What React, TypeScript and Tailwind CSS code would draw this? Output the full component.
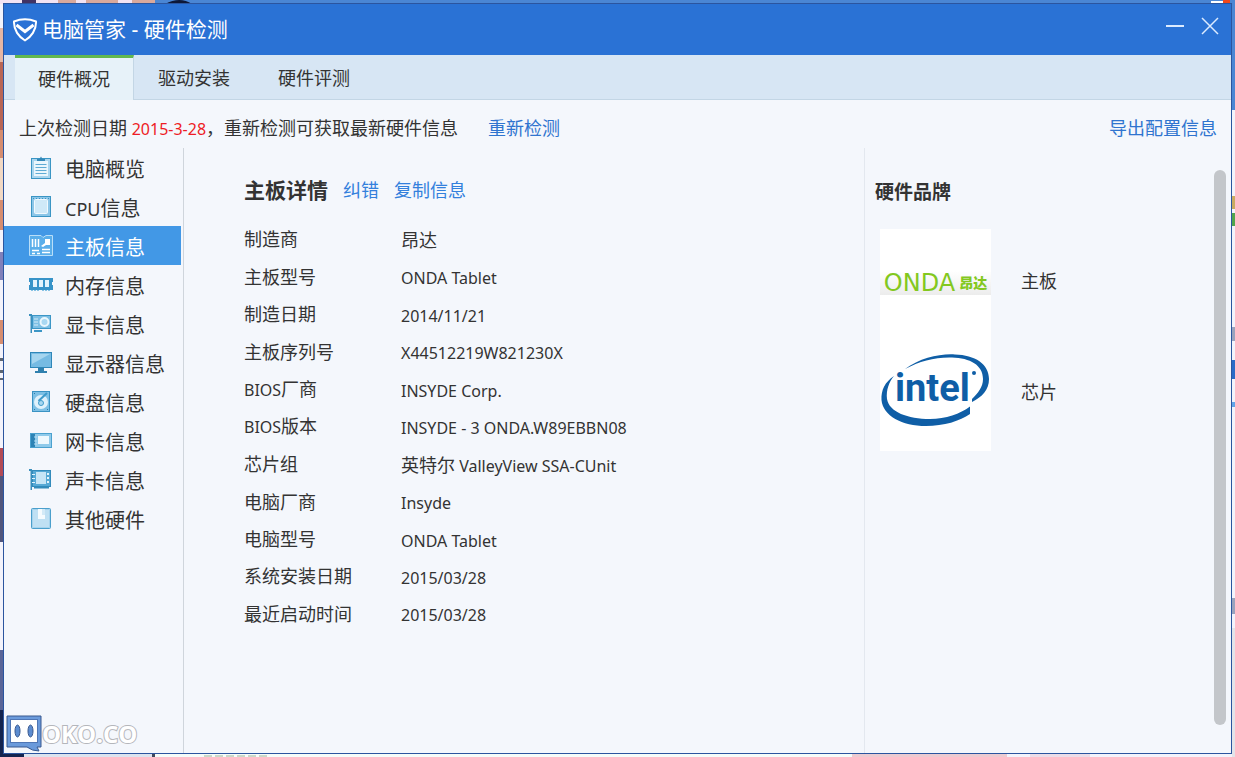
import type { ReactNode } from "react"
import { useState } from "react"

const NAV_ITEMS: { id: string; label: ReactNode; icon: ReactNode }[] = [
  {
    id: "overview",
    label: "电脑概览",
    icon: (
      <>
        <rect x="2.5" y="2.5" width="19" height="20" fill="#a9d5ee" stroke="#3a95c4" />
        <rect x="5" y="5" width="14" height="15" fill="#eaf6fc" />
        <path d="M8 5h8V3h-2.5L12 0.5 10.500 3H8z" fill="#3388b8" />
        <path d="M6.500 8.500h11M6.500 11.500h11M6.500 14.500h11M6.500 17.500h11" stroke="#5fabd4" />
      </>
    ),
  },
  {
    id: "cpu",
    label: (
      <>
        <span className="text-lg">CPU</span>信息
      </>
    ),
    icon: (
      <>
        <rect x="2.5" y="1.500" width="19" height="20" fill="#8cc6e8" stroke="#3a95c4" />
        <rect x="5.500" y="4.500" width="13" height="14" rx="1" fill="#cfe9f8" stroke="#f0f9fe" />
        <path d="M4 3.500h1M7 3.500h1M10 3.500h1M13 3.500h1M16 3.500h1M19 3.500h1" stroke="#3a95c4" />
      </>
    ),
  },
  {
    id: "board",
    label: "主板信息",
    icon: (
      <>
        <path d="M.5 1.500h11.500l2 2 3-2h6.500v20h-23z" fill="#5aaeea" stroke="#b9def8" />
        <path d="M3.500 5v8M6.500 5v8M9.500 5v8" stroke="#fff" strokeWidth="1.500" />
        <path d="M16 5h5v6h-4l-3 2-2-1 4-3z" fill="#fff" />
        <path d="M3 16.500h7M3 19.500h3M8 19.500h3M13 15.500h8M13 18.500h8" stroke="#fff" strokeWidth="1.500" />
      </>
    ),
  },
  {
    id: "memory",
    label: "内存信息",
    icon: (
      <>
        <path d="M0 5h24v4h-1v3h1v5H0v-5h1V9H0z" fill="#3793c8" />
        <path d="M4 7h4v7H4zM10 7h4v7h-4zM16 7h4v7h-4z" fill="#e3f3fc" />
        <path d="M2 17.500h9M13 17.500h9" stroke="#85c2e4" strokeDasharray="2 1" />
      </>
    ),
  },
  {
    id: "gpu",
    label: "显卡信息",
    icon: (
      <>
        <path d="M0 2h3v19H1.500V4H0z" fill="#3a8fbd" />
        <rect x="3.500" y="3.500" width="18" height="13" fill="#7dbfe4" stroke="#3c96c6" />
        <circle cx="15.500" cy="10" r="4" fill="#a9d8f2" stroke="#eaf7fd" strokeWidth="2" />
        <path d="M5 7h4M5 10h4M5 13h4" stroke="#d4ecf9" />
        <path d="M5 18h8v2H5z" fill="#3c96c6" />
      </>
    ),
  },
  {
    id: "display",
    label: "显示器信息",
    icon: (
      <>
        <rect x="1.500" y="1.500" width="21" height="15" fill="#76bbe3" stroke="#2f87b9" />
        <path d="M3 3h18L3 13z" fill="#a5d5ef" />
        <path d="M9 17h6v3h3v2H6v-2h3z" fill="#2f80ae" />
      </>
    ),
  },
  {
    id: "disk",
    label: "硬盘信息",
    icon: (
      <>
        <rect x="3.500" y="1.500" width="17" height="20" fill="#7ec0e5" stroke="#3a93c3" />
        <circle cx="12" cy="12" r="7" fill="#dff1fb" />
        <path d="M18 3 9.500 11" stroke="#3f9bcb" strokeWidth="2" />
        <circle cx="12" cy="13" r="2.500" fill="#a9d7f0" stroke="#3f9bcb" />
        <path d="M5 3.500h1M5 19.500h1M18 19.500h1" stroke="#2b7cab" />
      </>
    ),
  },
  {
    id: "network",
    label: "网卡信息",
    icon: (
      <>
        <rect x="1.500" y="4.500" width="21" height="14" fill="#8fcaea" stroke="#4aa1cf" />
        <path d="M2 5h4v13H2z" fill="#2d83b5" />
        <path d="M5 8h3M5 12h3M5 15h3" stroke="#b8def3" />
        <rect x="9" y="7" width="11" height="8" fill="#eef8fd" />
      </>
    ),
  },
  {
    id: "sound",
    label: "声卡信息",
    icon: (
      <>
        <path d="M0 1h3v21H1.500V3H0z" fill="#3a8fbd" />
        <rect x="3.500" y="2.500" width="18" height="16" fill="#57a9d5" stroke="#338bbb" />
        <rect x="7" y="4" width="10" height="12" fill="#c6e5f6" />
        <path d="M18 5h2v2h-2zM18 9h2v2h-2zM18 13h2v2h-2z" fill="#e4f4fc" />
        <path d="M3 6.500h3M3 10.500h3M3 14.500h3" stroke="#e4f4fc" />
        <path d="M5 19.500h15" stroke="#338bbb" strokeWidth="2" />
      </>
    ),
  },
  {
    id: "other",
    label: "其他硬件",
    icon: (
      <>
        <rect x="2.500" y="1.500" width="19" height="20" rx="1" fill="#a5d3ed" stroke="#4a9fcc" />
        <path d="M4 3h16v17H4z" fill="#bfe0f3" />
        <path d="M9 2h7v10H9z" fill="#f5fbfe" />
        <path d="M13 2h3v6h-3z" fill="#d3eaf7" />
      </>
    ),
  },
]

const DETAILS: { label: ReactNode; value: ReactNode }[] = [
  { label: "制造商", value: <span className="text-lg/6">昂达</span> },
  { label: "主板型号", value: "ONDA Tablet" },
  { label: "制造日期", value: "2014/11/21" },
  { label: "主板序列号", value: "X44512219W821230X" },
  { label: <><span className="text-base">BIOS</span>厂商</>, value: "INSYDE Corp." },
  { label: <><span className="text-base">BIOS</span>版本</>, value: "INSYDE - 3 ONDA.W89EBBN08" },
  { label: "芯片组", value: <><span className="text-lg/6">英特尔</span> ValleyView SSA-CUnit</> },
  { label: "电脑厂商", value: "Insyde" },
  { label: "电脑型号", value: "ONDA Tablet" },
  { label: "系统安装日期", value: "2015/03/28" },
  { label: "最近启动时间", value: "2015/03/28" },
]

const TABS = ["硬件概况", "驱动安装", "硬件评测"]

// Slivers of the desktop that show around the window
function Wallpaper() {
  return (
    <svg className="absolute inset-0 h-full w-full" viewBox="0 0 1235 757" preserveAspectRatio="none" aria-hidden="true">
      <rect width="1235" height="757" fill="#f3f3fb" />
      <path d="M0 0h155v4H0z" fill="#d9a99c" />
      <path d="M0 0h22v4H0zM36 0h22v4H36zM76 0h10v4H76zM118 0h14v4h-14z" fill="#f2e3f3" />
      <path d="M22 0h14v4H22z" fill="#413365" />
      <path d="M155 0h1080v110h-6V4H155z" fill="#4a86d4" />
      <path d="M165 4q15-8 27 0z" fill="#0d1838" />
      <path d="M1211 1h12v3h-12z" fill="#fff" />
      <path d="M1223 0h7v3h-7z" fill="#f0481c" />
      <path d="M0 28h4v34H0z" fill="#e5b6a4" />
      <path d="M0 62h4v68H0z" fill="#b96555" />
      <path d="M0 130h4v28H0zM0 200h4v30H0zM0 320h4v24H0z" fill="#d68d70" />
      <path d="M0 158h4v42H0z" fill="#f2d9c4" />
      <path d="M0 252h4v28H0z" fill="#8080ba" />
      <path d="M0 358h4v3H0zM0 370h4v3H0zM0 378h4v2H0z" fill="#5c6672" />
      <path d="M0 448h4v28H0z" fill="#b34a55" />
      <path d="M0 476h4v66H0z" fill="#50557c" />
      <path d="M0 650h4v60H0z" fill="#5a6598" />
      <path d="M0 710h4v47H0zM4 753h20v4H4z" fill="#14244f" />
      <path d="M24 753h130v4H24z" fill="#dce4ef" />
      <path d="M152 753h3v4h-3z" fill="#40485c" />
      <path d="M155 753h700v4H155z" fill="#f5fcf9" />
      <path d="M204 756h66" stroke="#9db398" strokeDasharray="8 3" />
      <path d="M852 753h155v4H852z" fill="#eccbd1" />
      <path d="M1030 753h60v4h-60z" fill="#ecdde8" />
      <path d="M1232 196h3v13h-3z" fill="#c9ab62" />
      <path d="M1232 213h3v13h-3z" fill="#52a44c" />
      <path d="M1232 360h3v19h-3z" fill="#2a6bc7" />
      <path d="M1232 402h3v5h-3z" fill="#62a5e8" />
      <path d="M1232 327h3v14h-3zM1232 598h3v16h-3z" fill="#9aa3bd" />
      <path d="M1232 628h3v129h-3z" fill="#e3e4e9" />
    </svg>
  )
}

function TitleBar() {
  return (
    <header className="flex h-[51px] items-center bg-[#2a72d5] pl-2 pr-3 text-white">
      <svg width="26" height="26" viewBox="0 0 26 26" fill="none" stroke="#fff" aria-hidden="true">
        <path d="M2 4.500Q13 0 24 4.500C24.500 13 19 20 13 23.500 7 20 1.500 13 2 4.500z" strokeWidth="2" strokeLinejoin="round" />
        <path d="m4.500 8 8.500 6.500L21.500 8" strokeWidth="3" />
      </svg>
      <h1 className="ml-1 grow text-[21px]">电脑管家 - 硬件检测</h1>
      <div className="flex items-center gap-4 pb-2">
        <button aria-label="最小化">
          <svg width="20" height="20" viewBox="0 0 20 20" stroke="#dcebff" strokeWidth="2" aria-hidden="true">
            <path d="M1 10h18" />
          </svg>
        </button>
        <button aria-label="关闭">
          <svg width="18" height="20" viewBox="0 0 18 20" stroke="#dcebff" strokeWidth="1.500" aria-hidden="true">
            <path d="m1 2 16 16M17 2 1 18" />
          </svg>
        </button>
      </div>
    </header>
  )
}

function OndaLogo() {
  return (
    <div className="flex h-[66px] w-full flex-col justify-end bg-white">
      <div className="flex h-6 items-center justify-center bg-gradient-to-b from-white to-[#ececec] text-[#83c81e]">
        <span className="font-['DejaVu_Sans'] text-2xl leading-none">ONDA</span>
        <span className="ml-1 text-sm leading-none font-black">昂达</span>
      </div>
    </div>
  )
}

function IntelLogo() {
  return (
    <svg width="111" height="111" viewBox="0 0 111 111" fill="#0f5ea6" role="img" aria-label="intel">
      <path d="M25 29C40 18 60 13.500 75 14.500C95 15 109 24 109 39C109 50 102 57 92 62V59C98 53 103 47 103 39C103 25 90 18 72 17.500C55 17 40 21 25 29z" />
      <path d="M14 36C5 42 1 50 1.500 60C3 76 22 86 46 86C64 86 80 81 90 74V66.500C80 74 66 79 50 79C28 79 9 72 7 59C6 50 9 42 14 36z" />
      <text x="15" y="61" fontFamily="Roboto, sans-serif" fontSize="38" fontWeight="700">intel</text>
      <circle cx="94" cy="33" r="2" />
    </svg>
  )
}

function Watermark() {
  return (
    <div className="absolute bottom-0 left-0.5 flex items-center">
      <svg width="36" height="38" viewBox="0 0 36 38" aria-hidden="true">
        <path d="M1 1h34v31h-4l2 4q-7 0-12-4H1z" fill="#6a9adb" stroke="#39598f" />
        <rect x="4.500" y="4.500" width="27" height="23" fill="#fff" stroke="#4f76b5" />
        <ellipse cx="11.500" cy="16" rx="2.500" ry="6" fill="#5c8cd0" stroke="#39598f" />
        <ellipse cx="24.500" cy="16" rx="2.500" ry="6" fill="#5c8cd0" stroke="#39598f" />
      </svg>
      <span className="font-['Open_Sans'] text-2xl leading-none font-bold text-white [-webkit-text-stroke:2px_#b4b6bb] [paint-order:stroke_fill]">
        OKO.CO
      </span>
    </div>
  )
}

export default function App() {
  const [tab, setTab] = useState(TABS[0])
  const [section, setSection] = useState("board")

  return (
    <div className="relative flex min-h-screen p-[3px] font-['Noto_Sans','Noto_Sans_CJK_SC',sans-serif] text-[#333]">
      <Wallpaper />
      <div className="relative flex grow flex-col border border-[#2b559f] bg-[#f4f7fc]">
        <TitleBar />

        <nav className="flex h-[45px] border-b border-[#c3d6e5] bg-[#d7e6f4] pl-[11px]">
          {TABS.map((name) => (
            <button
              key={name}
              onClick={() => setTab(name)}
              className={
                name === tab
                  ? "-mb-px w-[119px] border-t-3 border-r border-t-[#62b84f] border-r-[#c3d6e5] bg-[#e7f2f9] text-lg"
                  : "w-[120px] pt-0.5 text-lg"
              }
            >
              {name}
            </button>
          ))}
        </nav>

        <div className="flex h-12 items-center pt-2 pr-[14px] pl-[15px] text-lg">
          <p>
            上次检测日期 <span className="text-base text-[#ee1c25]">2015-3-28</span>，重新检测可获取最新硬件信息
          </p>
          <a href="#rescan" className="ml-[30px] text-[#2f74cf]">重新检测</a>
          <a href="#export" className="ml-auto text-[#2f74cf]">导出配置信息</a>
        </div>

        <div className="flex grow">
          <aside className="w-[180px] border-r border-[#cfd5dc] pr-0.5">
            <ul>
              {NAV_ITEMS.map((item) => (
                <li key={item.id}>
                  <button
                    onClick={() => setSection(item.id)}
                    className={
                      item.id === section
                        ? "flex h-[39px] w-full items-center gap-3 bg-[#4298e6] pl-[25px] text-xl text-white"
                        : "flex h-[39px] w-full items-center gap-3 pl-[25px] text-xl"
                    }
                  >
                    <svg width="24" height="24" viewBox="0 0 24 24" fill="none" aria-hidden="true">
                      {item.icon}
                    </svg>
                    <span className="pt-1">{item.label}</span>
                  </button>
                </li>
              ))}
            </ul>
          </aside>

          <main className="grow pt-[26px] pl-[60px]">
            <div className="flex items-center text-lg">
              <h2 className="text-[21px] font-bold">主板详情</h2>
              <a href="#report" className="ml-[15px] text-[#3380dc]">纠错</a>
              <a href="#copy" className="ml-[15px] text-[#3380dc]">复制信息</a>
            </div>
            <dl className="mt-[14px] grid min-h-[412px] auto-rows-fr">
              {DETAILS.map((row, i) => (
                <div key={i} className="flex items-center">
                  <dt className="w-[157px] text-lg/6">{row.label}</dt>
                  <dd className="pt-[3px] text-base/6">{row.value}</dd>
                </div>
              ))}
            </dl>
          </main>

          <aside className="flex w-[367px] border-l border-[#e3e8ef] pl-[10px]">
            <div className="grow pt-7">
              <h2 className="text-[19px] leading-8 font-bold">硬件品牌</h2>
              <ul className="mt-[21px] ml-[5px] text-lg">
                <li className="flex items-center gap-[30px]">
                  <div className="h-[111px] w-[111px] bg-white">
                    <OndaLogo />
                  </div>
                  <span className="pb-2">主板</span>
                </li>
                <li className="flex items-center gap-[30px]">
                  <div className="h-[111px] w-[111px] bg-white">
                    <IntelLogo />
                  </div>
                  <span className="pb-2">芯片</span>
                </li>
              </ul>
            </div>
            <div className="mt-[22px] mr-[5px] mb-7 w-3 rounded-full bg-[#c3c6ca]" />
          </aside>
        </div>

        <Watermark />
      </div>
    </div>
  )
}
